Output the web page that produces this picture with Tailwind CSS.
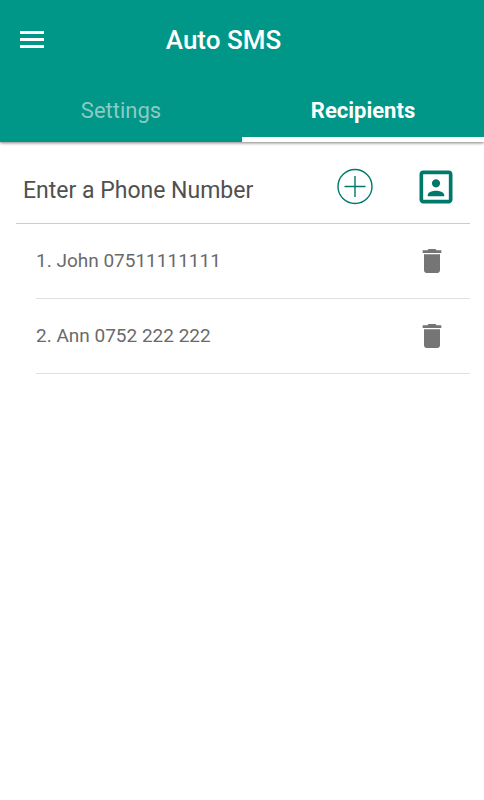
<!DOCTYPE html>
<html lang="en">
<head>
    <meta charset="UTF-8">
    <meta name="viewport" content="width=device-width, initial-scale=1.0">
    <title>Auto SMS</title>
    <script src="https://cdn.jsdelivr.net/npm/@tailwindcss/browser@4"></script>
</head>
<body class="bg-white min-h-screen font-['Roboto',sans-serif]">
    <header class="bg-[#009688] shadow-[0_1px_3px_rgba(0,0,0,0.5)]">
        <!-- Title bar -->
        <div class="flex items-center h-20 pl-4 pr-[85px]">
            <button type="button" aria-label="Menu" class="text-white">
                <svg class="w-8 h-8" viewBox="0 0 32 32" fill="currentColor">
                    <path d="M4 7h24v3H4zM4 14h24v3H4zM4 21h24v3H4z"/>
                </svg>
            </button>
            <h1 class="flex-1 text-center text-[26px] leading-8 font-medium text-white">Auto SMS</h1>
        </div>

        <!-- Tabs -->
        <nav class="grid grid-cols-2 h-[62px] text-[22px] text-center">
            <a href="#settings" class="pt-[15px] leading-8 text-[#8ccbc3]">Settings</a>
            <a href="#recipients" aria-current="page" class="pt-[15px] leading-8 font-bold text-white border-b-5 border-white">Recipients</a>
        </nav>
    </header>

    <main id="recipients" class="pl-4 pr-[14px]">
        <!-- Add a recipient -->
        <form class="flex items-center h-[82px] border-b border-[#cccccc]">
            <input type="tel" id="phone" aria-label="Phone number" placeholder="Enter a Phone Number"
                   class="flex-1 min-w-0 px-[7px] pt-5 pb-1 text-[23px] leading-8 text-[#505050] placeholder:text-[#505050] outline-none">
            <button type="button" aria-label="Add number" class="pt-2 mr-[37px] text-[#00796b]">
                <svg class="w-11 h-11" viewBox="0 0 44 44" fill="none" stroke="currentColor" stroke-width="1.4">
                    <circle cx="22" cy="21.5" r="17"/>
                    <path d="M22 11v21M11.5 21.5h21"/>
                </svg>
            </button>
            <button type="button" aria-label="Pick from contacts" class="pt-2 mr-3 text-[#00796b]">
                <svg class="w-11 h-11" viewBox="0 0 24 24" fill="currentColor">
                    <path d="M12 12.25c1.24 0 2.25-1.01 2.25-2.25S13.24 7.75 12 7.75 9.75 8.76 9.75 10s1.01 2.25 2.25 2.25zm4.5 4c0-1.5-3-2.25-4.5-2.25s-4.5.75-4.5 2.25V17h9v-.75zM19 3H5c-1.1 0-2 .9-2 2v14c0 1.1.9 2 2 2h14c1.1 0 2-.9 2-2V5c0-1.1-.9-2-2-2zm0 16H5V5h14v14z"/>
                </svg>
            </button>
        </form>

        <!-- Saved recipients -->
        <ul class="pl-5 text-[19px] text-[#6a6a6a]">
            <li class="flex items-center justify-between h-[75px] pr-[22px] border-b border-[#e0e0e0]">
                <span class="pt-px">1. John 07511111111</span>
                <button type="button" aria-label="Delete John" class="text-[#757575]">
                    <svg class="w-8 h-8" viewBox="0 0 24 24" fill="currentColor">
                        <path d="M6 19c0 1.1.9 2 2 2h8c1.1 0 2-.9 2-2V7H6v12zM19 4h-3.5l-1-1h-5l-1 1H5v2h14V4z"/>
                    </svg>
                </button>
            </li>
            <li class="flex items-center justify-between h-[75px] pr-[22px] border-b border-[#e0e0e0]">
                <span class="pt-px">2. Ann 0752 222 222</span>
                <button type="button" aria-label="Delete Ann" class="text-[#757575]">
                    <svg class="w-8 h-8" viewBox="0 0 24 24" fill="currentColor">
                        <path d="M6 19c0 1.1.9 2 2 2h8c1.1 0 2-.9 2-2V7H6v12zM19 4h-3.5l-1-1h-5l-1 1H5v2h14V4z"/>
                    </svg>
                </button>
            </li>
        </ul>
    </main>
</body>
</html>
